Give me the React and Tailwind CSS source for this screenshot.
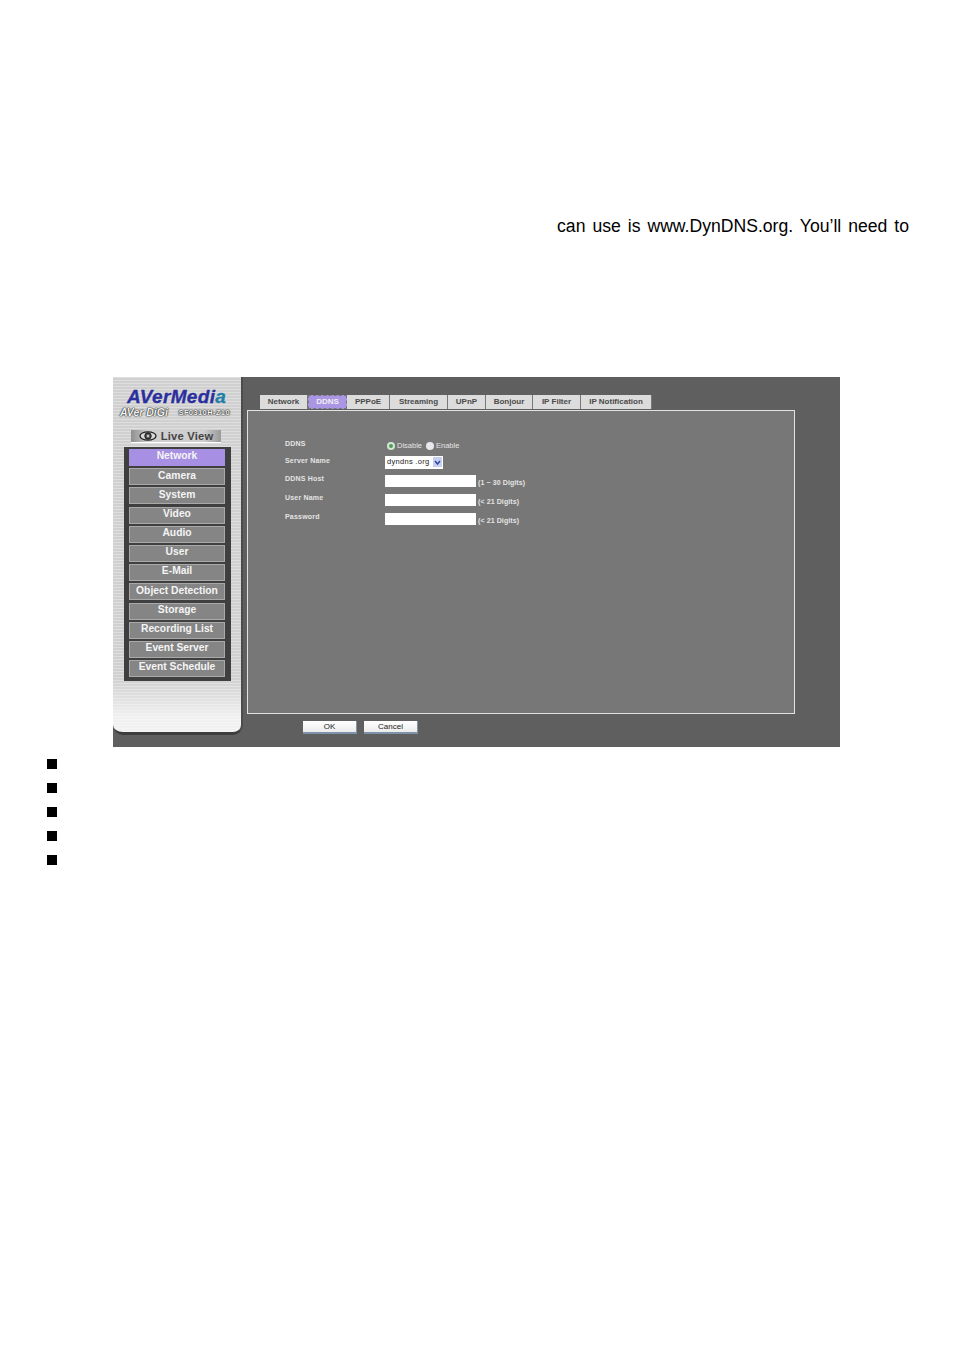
const menu = [
  "Network",
  "Camera",
  "System",
  "Video",
  "Audio",
  "User",
  "E-Mail",
  "Object Detection",
  "Storage",
  "Recording List",
  "Event Server",
  "Event Schedule",
];

const tabs = [
  { name: "Network", width: "w-[48px]" },
  { name: "DDNS", width: "w-[39px]", active: true },
  { name: "PPPoE", width: "w-[43px]" },
  { name: "Streaming", width: "w-[58px]" },
  { name: "UPnP", width: "w-[38px]" },
  { name: "Bonjour", width: "w-[47px]" },
  { name: "IP Filter", width: "w-[48px]" },
  { name: "IP Notification", width: "w-[71px]" },
];

const fields = [
  { label: "DDNS Host", hint: "(1 ~ 30 Digits)", margin: "mt-[6px]" },
  { label: "User Name", hint: "(< 21 Digits)", margin: "mt-[7px]" },
  { label: "Password", hint: "(< 21 Digits)", margin: "mt-[7px]" },
];

function EyeIcon() {
  return (
    <svg width="18" height="10" viewBox="0 0 18 10" className="mr-[4px]">
      <ellipse cx="9" cy="5" rx="8" ry="4.2" fill="#d8d8d8" stroke="#222" strokeWidth="1.3" />
      <circle cx="9" cy="5" r="3.2" fill="#555" stroke="#111" />
      <circle cx="9" cy="5" r="1.2" fill="#ccc" />
    </svg>
  );
}

function Sidebar() {
  return (
    <aside className="w-[130px] h-[358px] shrink-0 flex flex-col items-start rounded-b-[10px] border-b-[3px] border-b-[#3d3d3d] border-r-[2px] border-r-[#4c4c4c] bg-[linear-gradient(180deg,transparent_85%,rgba(255,255,255,0.7)_96%),repeating-linear-gradient(180deg,#dedede_0px,#dedede_1px,#d0d0d0_1px,#d0d0d0_3px)]">
      <div className="mt-[11px] ml-[14px] h-[16px] flex items-center text-[#2a2f9e] text-[19px] font-bold italic leading-none tracking-[0.35px] font-['Liberation_Sans',sans-serif] [-webkit-text-stroke:0.3px_#2a2f9e]">
        AVerMedi<span className="text-[#1f7fa8] [-webkit-text-stroke:0.3px_#1f7fa8]">a</span>
      </div>
      <div className="mt-[3px] ml-[7px] h-[11px] w-[110px] flex items-center justify-between text-[#f2f2f2] leading-none font-bold font-['Liberation_Sans',sans-serif] [text-shadow:0_0_1px_#222,0_0_1px_#222,0_0_2px_#444]">
        <span className="text-[10.5px] italic">AVer DiGi</span>
        <span className="text-[7.5px] tracking-[0.4px]">SF0310H-Z10</span>
      </div>
      <div className="mt-[12px] ml-[18px] w-[90px] h-[13px] flex items-center justify-center bg-[linear-gradient(90deg,#8f8f8f,#cfcfcf_20%,#cfcfcf_80%,#9a9a9a)] border-b border-b-white text-[#444] text-[11.2px] font-bold tracking-[0.2px] font-['Liberation_Sans',sans-serif]">
        <EyeIcon />
        Live View
      </div>
      <nav className="mt-[4px] ml-[11px] w-[107px] h-[234px] flex flex-col gap-[2.2px] bg-[#3f3f3f] pl-[5px] pr-[6px] pt-[2px]">
        {menu.map((item) => (
          <div
            key={item}
            className={`h-[17px] flex items-center justify-center pb-[2px] leading-none text-[#f4f4f4] text-[10.3px] font-bold font-['Liberation_Sans',sans-serif] border ${
              item === "Network" ? "bg-[#a78fe3] border-[#a78fe3]" : "bg-[#858585] border-[#a9a9a9]"
            }`}
          >
            {item}
          </div>
        ))}
      </nav>
    </aside>
  );
}

function TabBar() {
  return (
    <div className="flex h-[15px] ml-[13px]">
      {tabs.map((tab) => (
        <div
          key={tab.name}
          className={`${tab.width} h-[14px] flex items-center justify-center text-[8px] font-bold font-['Liberation_Sans',sans-serif] border-r border-[#777] ${
            tab.active
              ? "bg-[#ab96e6] text-[#eeeeee] border border-dashed border-[#444]"
              : "bg-[#dcdcdc] text-[#4a4a4a]"
          }`}
        >
          {tab.name}
        </div>
      ))}
    </div>
  );
}

function DdnsForm() {
  return (
    <section className="w-[548px] h-[304px] border border-[#e2e2e2] bg-[#777777] pl-[37px] pt-[26px] text-[#e4e4e4] text-[7px] font-bold leading-none font-['Liberation_Sans',sans-serif]">
      <div className="flex h-[16px] items-start">
        <span className="w-[100px] pt-[3px] tracking-[0.2px]">DDNS</span>
        <div className="flex items-center pl-[2px] pt-[5px] font-normal text-[7.5px]">
          <span className="w-[8px] h-[8px] rounded-full bg-[#eeeeee] border-[2px] border-[#cfe8d0] mr-[2px] flex items-center justify-center">
            <span className="w-[4px] h-[4px] shrink-0 rounded-full bg-[#4f9a58]" />
          </span>
          <span>Disable</span>
          <span className="w-[8px] h-[8px] rounded-full bg-[#e8e8ee] ml-[4px] mr-[2px]" />
          <span>Enable</span>
        </div>
      </div>
      <div className="flex h-[14px] mt-[2px] items-center">
        <span className="w-[100px] pb-[4px] tracking-[0.2px]">Server Name</span>
        <div className="w-[58px] h-[13px] flex items-center justify-between bg-white text-[#222] font-normal text-[7.5px] pl-[2px] pr-[1px] tracking-[0.3px]">
          dyndns .org
          <span className="w-[9px] h-[10px] flex items-center justify-center bg-[#c5cff0]">
            <svg width="7" height="5" viewBox="0 0 7 5">
              <path d="M1 1 L3.5 4 L6 1" fill="none" stroke="#2a3f9e" strokeWidth="1.4" />
            </svg>
          </span>
        </div>
      </div>
      {fields.map((field) => (
        <div key={field.label} className={`flex h-[12px] ${field.margin}`}>
          <span className="w-[100px] tracking-[0.2px]">{field.label}</span>
          <div className="w-[91px] h-[12px] bg-white" />
          <span className="ml-[2px] pt-[4px] text-[7px] tracking-[0.1px]">{field.hint}</span>
        </div>
      ))}
    </section>
  );
}

function AdminPanel() {
  return (
    <div className="ml-[113px] mt-[143px] w-[727px] h-[370px] flex bg-[#5f5f5f]">
      <Sidebar />
      <main className="ml-[4px] pt-[18px]">
        <TabBar />
        <DdnsForm />
        <div className="flex gap-[7px] ml-[56px] mt-[7px]">
          {["OK", "Cancel"].map((label) => (
            <button
              key={label}
              className="w-[54px] h-[13px] flex items-center justify-center bg-[linear-gradient(180deg,#ffffff,#ececec)] text-[#222] text-[8px] border-b-2 border-r border-[#7f93a8] font-['Liberation_Sans',sans-serif]"
            >
              {label}
            </button>
          ))}
        </div>
      </main>
    </div>
  );
}

export default function App() {
  return (
    <div className="w-[954px] h-[1350px] bg-white overflow-hidden">
      <p className="pt-[215px] pr-[45px] h-[234px] text-right text-black text-[17.6px] leading-[22px] font-['Liberation_Sans',sans-serif] [word-spacing:2.1px]">
        can use is www.DynDNS.org. You’ll need to
      </p>
      <AdminPanel />
      <ul className="ml-[47px] mt-[12px] flex flex-col gap-[14px]">
        {[0, 1, 2, 3, 4].map((i) => (
          <li key={i} className="w-[10px] h-[10px] bg-black" />
        ))}
      </ul>
    </div>
  );
}
